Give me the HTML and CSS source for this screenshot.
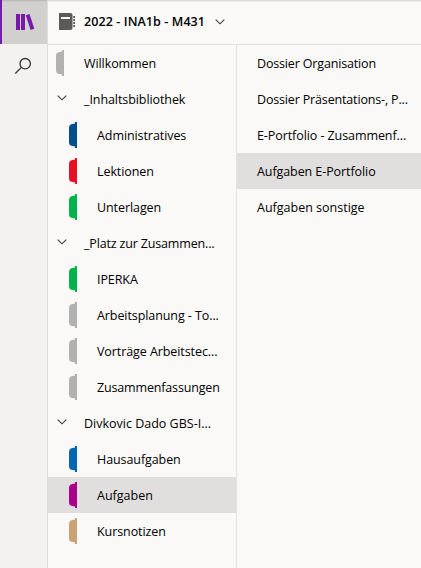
FILE: index.html
```html
<!DOCTYPE html>
<html lang="de">
<head>
<meta charset="utf-8">
<title>2022 - INA1b - M431</title>
<link rel="stylesheet" href="styles.css">
</head>
<body>
<svg class="defs" aria-hidden="true">
  <symbol id="tab" viewBox="0 0 8 26"><path d="M6 0h2v26H6v-1.4L2.3 23.8Q0 23 0 20.5v-15Q0 3 2.3 2.2L6 1.4z"/></symbol>
  <symbol id="chevron" viewBox="0 0 10 6"><path d="M.7.7 5 4.8 9.3.7" fill="none" stroke="#46342c" stroke-width="1.1"/></symbol>
</svg>
<div class="app">
  <nav class="rail">
    <div class="rail-item active">
      <svg width="20" height="18" viewBox="0 0 20 18"><path d="M1 1h4v16H1zM6 1h4v16H6zM10.8 2.2l3.7-1.1 4.8 14.6-3.7 1.2z" fill="#7719aa"/></svg>
    </div>
    <div class="rail-item search">
      <svg width="18" height="18" viewBox="0 0 18 18" fill="none" stroke="#333" stroke-width="1.3"><circle cx="11.2" cy="6.7" r="5.2"/><path d="M7.4 10.4 1.3 16.5"/></svg>
    </div>
  </nav>
  <main class="main">
    <header class="header">
      <svg width="17" height="18" viewBox="0 0 17 18"><path fill="#5b5a59" d="M0 0h11.5q2 0 2 2v13q0 2-2 2H0zM14.3 3H16v2h-1.7zM14.3 6H16v2h-1.7zM14.3 9H16v2h-1.7zM14.3 12H16v2h-1.7z"/><path fill="#faf9f8" d="M2 4h9v2H2z"/></svg>
      <h1 class="title">2022 - INA1b - M431</h1>
      <svg class="chevron"><use href="#chevron"/></svg>
    </header>
    <div class="columns">
      <div class="sections">
        <div class="row"><svg class="tab gray"><use href="#tab"/></svg><span>Willkommen</span></div>
        <div class="row group"><svg class="chevron"><use href="#chevron"/></svg><span>_Inhaltsbibliothek</span></div>
        <div class="row child"><svg class="tab navy"><use href="#tab"/></svg><span>Administratives</span></div>
        <div class="row child"><svg class="tab red"><use href="#tab"/></svg><span>Lektionen</span></div>
        <div class="row child"><svg class="tab green"><use href="#tab"/></svg><span>Unterlagen</span></div>
        <div class="row group tight"><svg class="chevron"><use href="#chevron"/></svg><span>_Platz zur Zusammen...</span></div>
        <div class="row child"><svg class="tab green"><use href="#tab"/></svg><span>IPERKA</span></div>
        <div class="row child"><svg class="tab gray"><use href="#tab"/></svg><span>Arbeitsplanung - To...</span></div>
        <div class="row child"><svg class="tab gray"><use href="#tab"/></svg><span>Vorträge Arbeitstec...</span></div>
        <div class="row child tight"><svg class="tab gray"><use href="#tab"/></svg><span>Zusammenfassungen</span></div>
        <div class="row group loose"><svg class="chevron"><use href="#chevron"/></svg><span>Divkovic Dado GBS-I...</span></div>
        <div class="row child"><svg class="tab blue"><use href="#tab"/></svg><span>Hausaufgaben</span></div>
        <div class="row child selected loose"><svg class="tab magenta"><use href="#tab"/></svg><span>Aufgaben</span></div>
        <div class="row child"><svg class="tab tan"><use href="#tab"/></svg><span>Kursnotizen</span></div>
      </div>
      <div class="pages">
        <div class="row tight"><span>Dossier Organisation</span></div>
        <div class="row tight"><span>Dossier Präsentations-, P...</span></div>
        <div class="row"><span>E-Portfolio - Zusammenf...</span></div>
        <div class="row selected"><span>Aufgaben E-Portfolio</span></div>
        <div class="row loose"><span>Aufgaben sonstige</span></div>
      </div>
    </div>
  </main>
</div>
</body>
</html>
```
FILE: styles.css
```css
* { box-sizing: border-box; }
body {
  margin: 0;
  background: #faf9f8;
  color: #000;
  font: 12.5px/18px "Open Sans", "Noto Sans", sans-serif;
  overflow: hidden;
}
svg { display: block; flex: none; }
.defs { display: none; }
.app { display: flex; height: 568px; }
.rail { width: 48px; background: #f3f2f1; border-right: 1px solid #dedddc; }
.rail-item { height: 44px; display: flex; align-items: center; padding-left: 15px; }
.rail-item.active { background: #d2d0ce; border-left: 2px solid #7719aa; padding-left: 13px; box-shadow: inset 0 3px 2px -2px #b5b3b1; }
.rail-item.search { padding-left: 14px; }
.main { flex: 1; min-width: 0; display: flex; flex-direction: column; }
.header {
  height: 45px;
  display: flex;
  align-items: center;
  padding-left: 11px;
  border-bottom: 1px solid #e1dfdd;
  box-shadow: inset 0 3px 2px -2px #ccc;
}
.title { margin: 0 10px 0 8px; font-size: 12.5px; font-weight: 600; letter-spacing: 0.09px; white-space: nowrap; }
.chevron { width: 10px; height: 6px; }
.columns { flex: 1; display: flex; }
.sections { width: 189px; border-right: 1px solid #e5e3e1; }
.pages { flex: 1; min-width: 0; }
.row { height: 36px; display: flex; align-items: center; padding-left: 8px; white-space: nowrap; letter-spacing: -0.08px; }
.row span { padding-top: 2px; }
.row.tight { letter-spacing: -0.16px; }
.row.loose { letter-spacing: 0; }
.row.selected { background: #e1dfdd; }
.tab { width: 8px; height: 26px; margin-right: 20px; }
.group { padding-left: 9px; }
.group .chevron { margin: -3px 17px 0 0; }
.child { padding-left: 21px; }
.pages .row { padding-left: 20px; }
.gray { fill: #b1b1b1; }
.navy { fill: #004e8c; }
.red { fill: #e81123; }
.green { fill: #00b44b; }
.blue { fill: #0067b0; }
.magenta { fill: #a9008b; }
.tan { fill: #c8a376; }
```
